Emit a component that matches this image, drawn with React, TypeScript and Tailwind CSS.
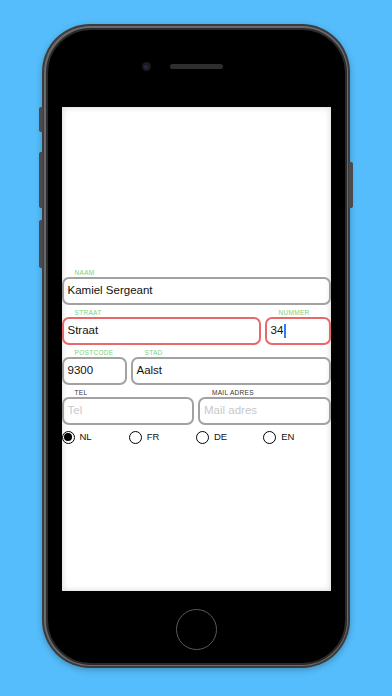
import React from 'react'

const font = { fontFamily: '"Liberation Sans", Arial, sans-serif' }

function Label({ text, green = true, className = '' }: { text: string; green?: boolean; className?: string }) {
  return (
    <div
      className={`h-[12px] pt-[4px] text-[6.5px] leading-[8px] tracking-[0.3px] ${green ? 'text-[#7dcf84]' : 'text-[#333]'} ${className}`}
    >
      {text}
    </div>
  )
}

function Field({
  value,
  placeholder,
  red = false,
  cursor = false,
}: {
  value?: string
  placeholder?: string
  red?: boolean
  cursor?: boolean
}) {
  return (
    <div
      className={`flex h-[28px] items-center rounded-[7px] border-2 px-[4px] text-[11.5px] ${
        red ? 'border-[#e8696b]' : 'border-[#a2a2a2]'
      }`}
    >
      {value ? (
        <span className="text-[#111]">{value}</span>
      ) : (
        <span className="text-[#c8c8cc]">{placeholder}</span>
      )}
      {cursor && <span className="ml-[1px] h-[14px] w-[2px] bg-[#2f7cf6]" />}
    </div>
  )
}

function Radio({ label, checked = false }: { label: string; checked?: boolean }) {
  return (
    <div className="flex items-center gap-[5px]">
      <div className="flex h-[13px] w-[13px] items-center justify-center rounded-full border-[1.5px] border-black">
        {checked && <div className="h-[8px] w-[8px] rounded-full bg-black" />}
      </div>
      <span className="text-[9.5px] text-[#111]">{label}</span>
    </div>
  )
}

export default function App() {
  return (
    <div className="flex h-[696px] w-[392px] justify-center overflow-hidden bg-[#55bdfb]" style={font}>
      <div className="relative mt-[24px] h-[644px] w-[308px]">
        {/* side buttons */}
        <div className="absolute left-[-3px] top-[83px] h-[25px] w-[4px] rounded-l-[2px] bg-[#4a4a4c]" />
        <div className="absolute left-[-3px] top-[128px] h-[56px] w-[4px] rounded-l-[2px] bg-[#4a4a4c]" />
        <div className="absolute left-[-3px] top-[196px] h-[48px] w-[4px] rounded-l-[2px] bg-[#4a4a4c]" />
        <div className="absolute right-[-3px] top-[138px] h-[46px] w-[4px] rounded-r-[2px] bg-[#4a4a4c]" />

        <div className="h-full w-full rounded-[48px] bg-[#3c3c3e] p-[2px] shadow-[0_2px_6px_rgba(0,0,0,0.25)]">
          <div className="h-full w-full rounded-[46px] bg-[#6a6a6c] p-[1.5px]">
            <div className="flex h-full w-full flex-col items-center rounded-[45px] border-[2px] border-[#2a2a2c] bg-black">
              {/* top bezel */}
              <div className="flex h-[77.5px] w-full items-start justify-center pt-[34.5px]">
                <div className="relative h-[5px] w-[53px] rounded-full bg-[#2e2e30]">
                  <div className="absolute left-[-28px] top-[-2px] flex h-[9px] w-[9px] items-center justify-center rounded-full bg-[#1a1a1c]">
                    <div className="h-[4px] w-[4px] rounded-full bg-[#1e2a55]" />
                  </div>
                </div>
              </div>

              {/* screen */}
              <div className="flex h-[484px] w-[269px] flex-col bg-white shadow-[inset_0_0_6px_rgba(0,0,0,0.18)]">
                <div className="h-[158px]" />
                <div className="flex flex-col">
                  <Label text="NAAM" className="pl-[13px]" />
                  <Field value="Kamiel Sergeant" />

                  <div className="flex gap-[4px]">
                    <div className="flex-1">
                      <Label text="STRAAT" className="pl-[13px]" />
                      <Field value="Straat" red />
                    </div>
                    <div className="w-[66px]">
                      <Label text="NUMMER" className="pl-[14px]" />
                      <Field value="34" red cursor />
                    </div>
                  </div>

                  <div className="flex gap-[4px]">
                    <div className="w-[65px]">
                      <Label text="POSTCODE" className="pl-[13px]" />
                      <Field value="9300" />
                    </div>
                    <div className="flex-1">
                      <Label text="STAD" className="pl-[14px]" />
                      <Field value="Aalst" />
                    </div>
                  </div>

                  <div className="flex gap-[4px]">
                    <div className="flex-1">
                      <Label text="TEL" green={false} className="pl-[13px]" />
                      <Field placeholder="Tel" />
                    </div>
                    <div className="flex-1">
                      <Label text="MAIL ADRES" green={false} className="pl-[14px]" />
                      <Field placeholder="Mail adres" />
                    </div>
                  </div>

                  <div className="mt-[5px] grid grid-cols-4">
                    <Radio label="NL" checked />
                    <Radio label="FR" />
                    <Radio label="DE" />
                    <Radio label="EN" />
                  </div>
                </div>
              </div>

              {/* bottom bezel */}
              <div className="flex w-full flex-1 items-start justify-center pt-[18px]">
                <div className="h-[41px] w-[41px] rounded-full border-[1.5px] border-[#5a5a5e] bg-black" />
              </div>
            </div>
          </div>
        </div>
      </div>
    </div>
  )
}
